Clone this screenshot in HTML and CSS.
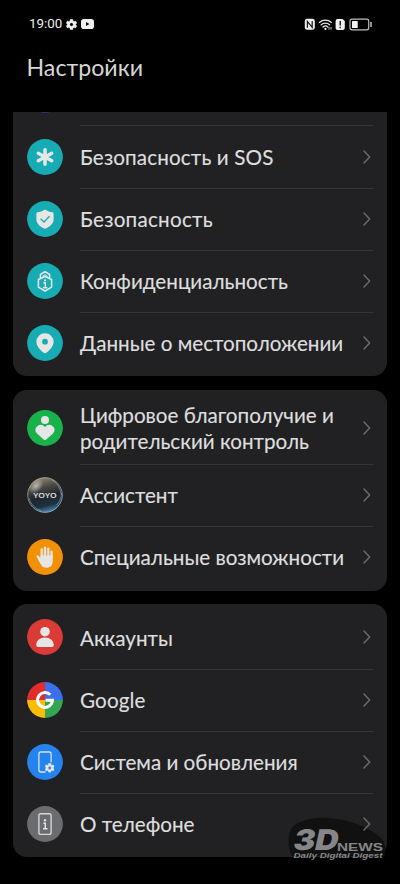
FILE: index.html
```
<!DOCTYPE html>
<html lang="ru">
<head>
<meta charset="utf-8">
<title>Настройки</title>
<link rel="stylesheet" href="styles.css">
</head>
<body>
<svg class="defs" width="0" height="0" aria-hidden="true">
  <symbol id="chev" viewBox="0 0 8 14"><path d="M1 1l5.700 6L1 13" fill="none" stroke="#6c6c6d" stroke-width="1.400" stroke-linecap="round" stroke-linejoin="round"/></symbol>
  <symbol id="gear" viewBox="-6 -6 12 12"><path fill-rule="evenodd" d="M-1.3-5.6h2.6l.4 1.7 1.1.6 1.7-.5 1.3 2.2-1.2 1.2v.8l1.2 1.2-1.3 2.2-1.7-.5-1.1.6-.4 1.7h-2.6l-.4-1.7-1.1-.6-1.7.5-1.3-2.2 1.2-1.2v-.8l-1.2-1.2 1.3-2.2 1.7.5 1.1-.6zM0-1.9a1.9 1.9 0 1 0 0 3.8a1.9 1.9 0 1 0 0-3.8z"/></symbol>
</svg>
<header class="status">
  <span class="time">19:00</span>
  <svg class="s-gear" width="11" height="11" fill="#f0f0f0" stroke="#f0f0f0" stroke-width=".4"><use href="#gear"/></svg>
  <svg class="s-tube" width="13" height="10" viewBox="0 0 13 10"><rect width="13" height="10" rx="2.8" fill="#f0f0f0"/><path d="M5 3v4l3.500-2z" fill="#111"/></svg>
  <svg class="s-right" width="68" height="13" viewBox="0 0 68 13">
    <rect x=".8" y=".8" width="10" height="11" rx="2.4" fill="#eee"/>
    <path d="M3.400 9.800V3.400l4.800 6V3" fill="none" stroke="#111" stroke-width="1.200"/>
    <g fill="none" stroke="#e8e8e8" stroke-width="1.300" stroke-linecap="round"><path d="M15.400 4.400a9.200 9.200 0 0 1 12 0M17.200 6.700a6.200 6.200 0 0 1 8.400 0M19 9a3.500 3.500 0 0 1 4.800 0"/></g>
    <circle cx="21.400" cy="10.900" r="1.100" fill="#eee"/><path d="M25 9v2.600M27 9v2.600" stroke="#bbb"/>
    <path d="M33.600.9h5l2.200 2.200v7a2 2 0 0 1-2 2h-5.200a2 2 0 0 1-2-2V2.900a2 2 0 0 1 2-2z" fill="#f2f2f2"/>
    <path d="M36.200 3v4.600M36.200 8.800v1.500" stroke="#111" stroke-width="1.400"/>
    <rect x="46" y="1.200" width="18.700" height="10.600" rx="2" fill="none" stroke="#bdbdbd" stroke-width="1.200"/>
    <rect x="48" y="3" width="5.700" height="7" rx=".6" fill="#f4f4f4"/>
    <path d="M67 4v5" stroke="#c4c4c4" stroke-width="1.500"/>
  </svg>
</header>
<h1>Настройки</h1>
<main>
  <section class="card card-clipped">
    <div class="peek"><i></i></div>
    <div class="row">
      <svg class="icon" viewBox="0 0 36 36"><circle cx="18" cy="18" r="17.900" fill="#17acb3"/><path d="M18 10.700v14.600M11.300 14.300l13.400 7.400M24.700 14.300l-13.400 7.400" stroke="#e6e6e6" stroke-width="3.500" stroke-linecap="round"/></svg>
      <span class="label loose">Безопасность и SOS</span><svg class="chev"><use href="#chev"/></svg>
    </div>
    <div class="row">
      <svg class="icon" viewBox="0 0 36 36"><circle cx="18" cy="18" r="17.900" fill="#17acb3"/><path d="M18 8.500c2.400 1.700 5.200 2.500 7.500 2.700.8.100 1.100.5 1.100 1.300v5.700c0 4.200-3.300 7.300-8.600 9.500-5.300-2.200-8.600-5.300-8.600-9.500v-5.700c0-.8.300-1.200 1.100-1.300 2.300-.2 5.100-1 7.500-2.700z" fill="#e6e6e6"/><path d="M13.600 17.700l3.400 3.300 5.500-5.700" fill="none" stroke="#17acb3" stroke-width="1.300"/></svg>
      <span class="label looser">Безопасность</span><svg class="chev"><use href="#chev"/></svg>
    </div>
    <div class="row">
      <svg class="icon" viewBox="0 0 36 36"><circle cx="18" cy="18" r="17.900" fill="#17acb3"/><g fill="none" stroke="#e6e6e6" stroke-width="1.500" stroke-linejoin="round"><path d="M18 13.500l6.600 3v7.600L18 28l-6.600-3.900v-7.600z"/><path d="M13.400 15.200v-3.700L18 8.700l4.600 2.800v3.700"/><path d="M16 13.800v-.9l2-1.100 2 1.100v.9" stroke-width="1"/></g><path d="M16.300 19.800h2v4.800M16 24.700h4.300" fill="none" stroke="#e6e6e6" stroke-width="1.400"/><circle cx="18" cy="17.300" r="1.100" fill="#e6e6e6"/></svg>
      <span class="label">Конфиденциальность</span><svg class="chev"><use href="#chev"/></svg>
    </div>
    <div class="row">
      <svg class="icon" viewBox="0 0 36 36"><circle cx="18" cy="18" r="17.900" fill="#17acb3"/><path fill-rule="evenodd" d="M18 8.200a8.500 8.500 0 0 1 8.600 8.500c0 4.400-3.600 8-6.900 10.900q-1.700 1.400-3.400 0c-3.300-2.900-6.900-6.500-6.900-10.900A8.500 8.500 0 0 1 18 8.200zm0 5.600a2.900 2.900 0 1 0 0 5.800 2.900 2.900 0 1 0 0-5.800z" fill="#e6e6e6"/></svg>
      <span class="label">Данные о местоположении</span><svg class="chev"><use href="#chev"/></svg>
    </div>
  </section>

  <section class="card">
    <div class="row row-tall">
      <svg class="icon" viewBox="0 0 36 36"><circle cx="18" cy="18" r="17.900" fill="#18b14c"/><g fill="#e6e6e6"><circle cx="18" cy="10.100" r="4"/><path d="M18 17.300c2-2.800 5-3 7.100-1.600 3.200 2.200 3.200 5.600.6 8.100L19 29.700q-1 .8-2 0l-6.700-5.900c-2.600-2.500-2.600-5.900.6-8.100 2.100-1.400 5.100-1.200 7.100 1.600z"/></g></svg>
      <span class="label">Цифровое благополучие и<br>родительский контроль</span><svg class="chev"><use href="#chev"/></svg>
    </div>
    <div class="row">
      <svg class="icon" viewBox="0 0 36 36">
        <defs>
          <linearGradient id="orb" x1=".35" y1="0" x2=".6" y2="1"><stop offset="0" stop-color="#8f8572"/><stop offset=".28" stop-color="#4b4a45"/><stop offset=".55" stop-color="#20262c"/><stop offset=".8" stop-color="#1d3040"/><stop offset="1" stop-color="#5288ac"/></linearGradient>
          <linearGradient id="rim" x1=".2" y1="0" x2=".6" y2="1"><stop offset="0" stop-color="#b7a688"/><stop offset=".45" stop-color="#77818a"/><stop offset="1" stop-color="#79b1d8"/></linearGradient>
          <radialGradient id="glow"><stop offset="0" stop-color="#d7d5cc" stop-opacity=".75"/><stop offset="1" stop-color="#d7d5cc" stop-opacity="0"/></radialGradient>
        </defs>
        <circle cx="18" cy="18" r="17.300" fill="url(#orb)" stroke="url(#rim)"/>
        <ellipse cx="9" cy="9" rx="9" ry="6" transform="rotate(-45 9 9)" fill="url(#glow)"/>
        <path d="M25 3c5 3 8.500 8 9 14M2 21c1.500 6 6 11 12 12.500M34.500 16c0 5-2 9-5 12" fill="none" stroke="#a6bdca" opacity=".5"/>
        <text class="yoyo" x="6.300" y="20.800" textLength="23.500" lengthAdjust="spacingAndGlyphs">YOYO</text>
      </svg>
      <span class="label">Ассистент</span><svg class="chev"><use href="#chev"/></svg>
    </div>
    <div class="row">
      <svg class="icon" viewBox="0 0 36 36"><circle cx="18" cy="18" r="17.900" fill="#f29106"/><g stroke="#e6e6e6" stroke-width="2.300" stroke-linecap="round"><path d="M14.700 19V10.400M18 18V8.700M21.300 18V9.700M24.600 19V12.700"/></g><path d="M13.550 16.500H25.750V22c0 4.300-2.400 6.800-6.200 6.800-3.200 0-5.100-1.500-6.300-4.300l-3.700-6.800c-.5-1.300 1.200-2 2-.9l2 2.200z" fill="#e6e6e6"/></svg>
      <span class="label">Специальные возможности</span><svg class="chev"><use href="#chev"/></svg>
    </div>
  </section>

  <section class="card">
    <div class="row">
      <svg class="icon" viewBox="0 0 36 36"><circle cx="18" cy="18" r="17.900" fill="#da3b36"/><g fill="#e6e6e6"><circle cx="18" cy="12.700" r="4.800"/><path d="M9.200 26c.4-4.600 3.800-7.400 8.800-7.400s8.400 2.800 8.800 7.400q.1 2-1.900 2H11.100q-2 0-1.900-2z"/></g></svg>
      <span class="label">Аккаунты</span><svg class="chev"><use href="#chev"/></svg>
    </div>
    <div class="row">
      <svg class="icon" viewBox="0 0 36 36"><path d="M18 18V.1A17.900 17.900 0 0 0 .1 18z" fill="#e12d2b"/><path d="M18 18h17.900A17.900 17.900 0 0 0 18 .1z" fill="#3b6fee"/><path d="M18 18H.1A17.900 17.900 0 0 0 18 35.900z" fill="#fbbc06"/><path d="M18 18v17.900A17.900 17.900 0 0 0 35.900 18z" fill="#34a553"/><path d="M23.300 12.800A7.400 7.400 0 1 0 25.400 18.300H18.500" fill="none" stroke="#fff" stroke-width="3"/></svg>
      <span class="label loose">Google</span><svg class="chev"><use href="#chev"/></svg>
    </div>
    <div class="row">
      <svg class="icon" viewBox="0 0 36 36"><circle cx="18" cy="18" r="17.900" fill="#2583ee"/><path d="M18 28h-4.200q-1.900 0-1.900-1.900V9.900Q11.900 8 13.800 8h8.400q1.900 0 1.900 1.900v8" fill="none" stroke="#d4e2f2" stroke-width="1.300" stroke-linecap="round"/><svg x="17.800" y="19" width="9.800" height="9.800" fill="#e6e6e6" stroke="#e6e6e6" stroke-width=".4"><use href="#gear"/></svg></svg>
      <span class="label">Система и обновления</span><svg class="chev"><use href="#chev"/></svg>
    </div>
    <div class="row">
      <svg class="icon" viewBox="0 0 36 36"><circle cx="18" cy="18" r="17.900" fill="#6b6c70"/><rect x="11.900" y="7.800" width="12.200" height="20.600" rx="2" fill="none" stroke="#d6d6d6" stroke-width="1.400"/><circle cx="18" cy="14.200" r="1.200" fill="#e2e2e2"/><path d="M16.300 17.300h2v5.300M16 22.700h4.500" fill="none" stroke="#e2e2e2" stroke-width="1.500"/></svg>
      <span class="label">О телефоне</span><svg class="chev"><use href="#chev"/></svg>
    </div>
    <svg class="mark" width="102" height="50" viewBox="0 0 102 50">
      <path d="M6 44C2 35 1 24 5 17 10 10 24 5 42 6c24 2 42 10 53 20 4 4 5 11 4 18z" fill="#0e0e0f" opacity=".85"/>
      <g fill="#868688">
        <text class="m-3d" transform="translate(6 38.300) skewX(-12)" textLength="45" lengthAdjust="spacingAndGlyphs">3D</text>
        <text class="m-news" x="51" y="38.600" textLength="46" lengthAdjust="spacingAndGlyphs">NEWS</text>
        <text class="m-tag" x="7.500" y="46" textLength="89" lengthAdjust="spacingAndGlyphs">Daily Digital Digest</text>
      </g>
    </svg>
  </section>
</main>
</body>
</html>
```
FILE: styles.css
```
* { box-sizing: border-box; }
body {
  margin: 0;
  width: 400px;
  height: 884px;
  overflow: hidden;
  background: #000;
  color: #dededf;
  font-family: Lato, "Noto Sans", sans-serif;
}
.defs { position: absolute; }
.status {
  display: flex;
  align-items: center;
  height: 48px;
  padding: 0 28.500px 0 29px;
}
.time {
  width: 33px;
  font: 400 13.400px/16px Roboto, sans-serif;
  color: #eee;
}
.s-gear { margin-left: 4px; }
.s-tube { margin-left: 4px; }
.s-right { margin-left: auto; }
h1 {
  margin: 0;
  height: 64px;
  padding: 5px 0 0 26.500px;
  font-size: 23.200px;
  line-height: 28px;
  font-weight: 400;
  color: #d6d6d6;
}
main {
  display: flex;
  flex-direction: column;
  gap: 13.400px;
  padding: 0 13.500px 0 13.300px;
}
.card {
  position: relative;
  z-index: 0;
  padding: 2.400px 0 2.100px;
  background: #212123;
  border-radius: 14px;
}
.card-clipped {
  padding-top: 0;
  border-radius: 0 0 14px 14px;
}
.peek {
  display: flex;
  height: 13.400px;
  padding-left: 27.500px;
}
.peek i {
  width: 8px;
  height: 1px;
  background: #2b3470;
  border-radius: 0 0 4px 4px;
}
.row {
  display: flex;
  align-items: center;
  height: 62.250px;
  padding: 0 15.500px 0 13.400px;
  background: linear-gradient(#353537, #353537) 67px 0 / 293px 1px no-repeat;
}
.card:not(.card-clipped) .row:first-child { background: none; }
.row-tall { height: 71.700px; }
.icon {
  flex: none;
  width: 36px;
  height: 36px;
}
.label {
  flex: 1;
  margin: 2px 0 0 17.300px;
  font-size: 20.650px;
  line-height: 25.700px;
  white-space: nowrap;
  -webkit-text-stroke: .15px #dededf;
}
.loose { letter-spacing: .13px; }
.looser { letter-spacing: .25px; }
.chev {
  flex: none;
  width: 8px;
  height: 14px;
}
.yoyo {
  font: 600 7.600px "Open Sans", sans-serif;
  fill: #e4e4e4;
}
.mark {
  position: absolute;
  z-index: -1;
  right: -1px;
  bottom: -5px;
}
.m-3d { font: 900 28.500px Inter, sans-serif; }
.m-news { font: 700 11.500px "Liberation Sans", sans-serif; }
.m-tag { font: italic 700 7.200px "Liberation Sans", sans-serif; }
```
